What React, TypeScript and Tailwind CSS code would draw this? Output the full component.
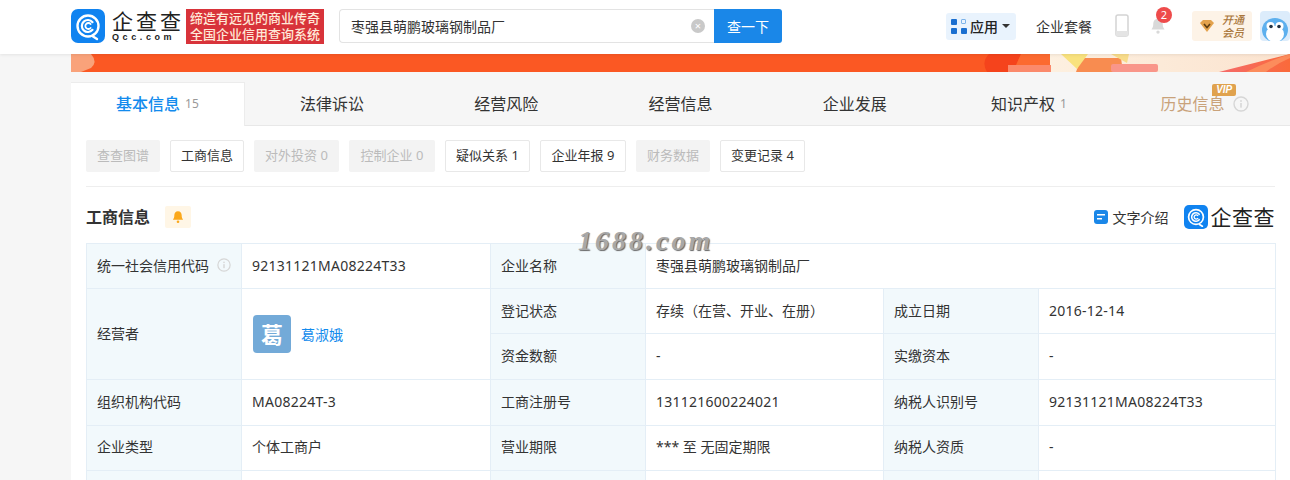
const FONT = "font-['Noto_Sans','Noto_Sans_CJK_SC',sans-serif]";

function LogoMark({ className }: { className: string }) {
  return (
    <svg viewBox="0 0 34 34" className={className}>
      <rect width="34" height="34" rx="7" fill="#1083f0" />
      <circle cx="17" cy="17" r="10.5" fill="none" stroke="#fff" strokeWidth="2.4" />
      <path d="M22 27.5 L26 30" stroke="#fff" strokeWidth="2.4" strokeLinecap="round" />
      <path d="M21.5 13.2 A6 6 0 1 0 21.5 20.8" fill="none" stroke="#fff" strokeWidth="2.2" strokeLinecap="round" />
      <path d="M19.6 15 A3 3 0 1 0 19.6 19" fill="none" stroke="#fff" strokeWidth="1.8" strokeLinecap="round" />
    </svg>
  );
}

function InfoIcon({ className }: { className: string }) {
  return (
    <svg viewBox="0 0 16 16" className={className}>
      <circle cx="8" cy="8" r="7" fill="none" stroke="#d6d6d6" strokeWidth="1.4" />
      <rect x="7.2" y="7" width="1.6" height="4.6" fill="#d6d6d6" />
      <rect x="7.2" y="4.2" width="1.6" height="1.6" fill="#d6d6d6" />
    </svg>
  );
}

function Bell({ className, color }: { className: string; color: string }) {
  return (
    <svg viewBox="0 0 16 16" className={className}>
      <path d="M8 1.5c-2.8 0-4.2 2.2-4.2 4.6 0 2.6-.7 3.8-1.6 5h11.6c-.9-1.2-1.6-2.4-1.6-5C12.200 3.700 10.800 1.500 8 1.500z" fill={color} />
      <circle cx="8" cy="13.400" r="1.500" fill={color} />
    </svg>
  );
}

function Header() {
  return (
    <header className="h-[54px] bg-white shadow-[0_1px_3px_rgba(0,0,0,0.08)] flex items-center pl-[71px] pb-[2px] relative z-10">
      <LogoMark className="w-[34px] h-[34px]" />
      <div className="ml-[7px] w-[70px] flex flex-col text-[#222]">
        <span className="text-[21px] leading-[22px] tracking-[3px] whitespace-nowrap">企查查</span>
        <span className="text-[9px] leading-[10px] tracking-[3.600px] font-['Liberation_Sans',sans-serif] font-bold whitespace-nowrap">Qcc.com</span>
      </div>
      <div className="ml-[4px] w-[138px] h-[35px] bg-[#d8333a] text-[#ffe9d8] text-[13px] leading-[16px] flex flex-col items-center justify-center font-medium whitespace-nowrap">
        <span>缔造有远见的商业传奇</span>
        <span>全国企业信用查询系统</span>
      </div>
      <div className="ml-[15px] w-[375px] h-[34px] border border-[#e3e3e3] border-r-0 rounded-l-[4px] flex items-center pl-[11px] pr-[9px] text-[14px] text-[#333]">
        <span className="flex-1">枣强县萌鹏玻璃钢制品厂</span>
        <span className="w-[14px] h-[14px] rounded-full bg-[#c9c9c9] text-white text-[11px] leading-[14px] text-center">×</span>
      </div>
      <button className="w-[68px] h-[34px] bg-[#1a87e8] text-white text-[14px] rounded-r-[3px]">查一下</button>
      <div className="ml-[164px] w-[70px] h-[27px] bg-[#e9f3fd] rounded-[3px] flex items-center pl-[5px]">
        <div className="grid grid-cols-2 gap-[3px] w-[16px]">
          <span className="w-[6px] h-[6px] rounded-[1px] bg-[#1a6fd0]" />
          <span className="w-[5px] h-[5px] rounded-[1px] border border-[#7db4ea]" />
          <span className="w-[6px] h-[6px] rounded-[1px] bg-[#1a6fd0]" />
          <span className="w-[6px] h-[6px] rounded-[1px] bg-[#1a6fd0]" />
        </div>
        <span className="ml-[3px] text-[14px] text-[#222] font-medium">应用</span>
        <span className="ml-[4px] w-0 h-0 border-x-[4px] border-x-transparent border-t-[4px] border-t-[#333]" />
      </div>
      <span className="ml-[20px] text-[14px] text-[#333]">企业套餐</span>
      <svg viewBox="0 0 14 24" className="ml-[23px] w-[14px] h-[24px]">
        <rect x="1" y="1" width="12" height="21" rx="2" fill="none" stroke="#d4d4d4" strokeWidth="1.500" />
        <rect x="1" y="17" width="12" height="5" rx="1" fill="#e4e4e4" />
      </svg>
      <div className="relative ml-[20px] w-[18px] h-[20px]">
        <Bell className="w-[18px] h-[20px]" color="#d9d9d9" />
        <span className="absolute -top-[9px] left-[7px] w-[16px] h-[16px] rounded-full bg-[#ee4b4b] text-white text-[11px] leading-[16px] text-center">2</span>
      </div>
      <div className="ml-[25px] w-[60px] h-[30px] bg-[#fdf3e7] rounded-[3px] flex items-center pl-[7px]">
        <svg viewBox="0 0 16 14" className="w-[16px] h-[14px]">
          <path d="M1 4 L4 1 H12 L15 4 L8 13 Z" fill="#e3a24c" />
          <path d="M5 5 L8 8.500 L11 5" fill="none" stroke="#5d3d12" strokeWidth="1.600" />
        </svg>
        <span className="ml-[6px] text-[11px] leading-[13px] text-[#a9763a] font-medium italic w-[24px] text-center">开通 会员</span>
      </div>
      <svg viewBox="0 0 30 30" className="ml-[8px] w-[30px] h-[30px] shrink-0">
        <rect width="30" height="30" rx="4" fill="#dcecfb" />
        <ellipse cx="15" cy="19" rx="13" ry="12" fill="#5db0ee" />
        <ellipse cx="15" cy="23" rx="9" ry="8" fill="#fff" />
        <circle cx="10.500" cy="15" r="4" fill="#fff" />
        <circle cx="19.500" cy="15" r="4" fill="#fff" />
        <circle cx="11" cy="15.500" r="1.800" fill="#234" />
        <circle cx="19" cy="15.500" r="1.800" fill="#234" />
      </svg>
    </header>
  );
}

function Banner() {
  return (
    <div className="h-[18px] ml-[71px] overflow-hidden bg-[#fb5823]">
      <svg viewBox="0 0 1219 18" className="w-[1219px] h-[18px] block">
        <defs>
          <linearGradient id="cream" x1="0" x2="1" y1="0" y2="0">
            <stop offset="0" stopColor="#fdf0e0" />
            <stop offset="1" stopColor="#fbe3cf" />
          </linearGradient>
          <linearGradient id="edge" x1="0" x2="1" y1="0" y2="0">
            <stop offset="0" stopColor="#f56a6a" />
            <stop offset="1" stopColor="#fa6a3a" />
          </linearGradient>
        </defs>
        <path d="M0 0H20Q27 8 20 14L10 18H0Z" fill="#f9a27a" />
        <path d="M918 0H950L942 18H916Q910 8 918 0Z" fill="#f5431c" />
        <path d="M950 0H980V18H942Z" fill="#fc6a30" />
        <rect x="979" y="0" width="240" height="18" fill="url(#cream)" />
        <path d="M1010 4H1050L1052 18H1005Z" fill="#f88c50" />
        <rect x="937" y="11" width="43" height="7" fill="#fb8a6c" />
        <rect x="1040" y="10" width="47" height="8" rx="2" fill="#f9968a" />
        <path d="M990 0H1017L1006 15Z" fill="#f9e27e" />
        <path d="M1040 0H1058L1056 9Z" fill="#f8dc8a" />
        <path d="M1148 18Q1180 10 1219 0V18Z" fill="url(#edge)" />
        <path d="M1175 18Q1200 6 1219 0V4Q1205 10 1195 18Z" fill="#fc8c5c" />
      </svg>
    </div>
  );
}

type TabItem = { label: string; count?: string };
const tabs: TabItem[] = [
  { label: "法律诉讼" },
  { label: "经营风险" },
  { label: "经营信息" },
  { label: "企业发展" },
  { label: "知识产权", count: "1" },
];

function Tabs() {
  return (
    <div className="h-[44px] flex bg-[#f6f6f6] border-b border-[#e8e8e8]">
      <div className="w-[174px] h-[44px] pb-[2px] bg-white border-r border-t border-[#ececec] flex items-center justify-center text-[16px] text-[#128bed] font-medium">
        基本信息<span className="ml-[5px] text-[12px] text-[#999] font-normal">15</span>
      </div>
      {tabs.map((t) => (
        <div key={t.label} className="w-[174.500px] flex items-center justify-center text-[16px] text-[#333]">
          {t.label}
          {t.count && <span className="ml-[5px] text-[12px] text-[#999]">{t.count}</span>}
        </div>
      ))}
      <div className="relative pl-[3px] w-[174px] flex items-center justify-center text-[16px] text-[#c9a27a]">
        历史信息
        <InfoIcon className="ml-[8px] w-[16px] h-[16px]" />
        <span className="absolute left-[96px] top-[2px] w-[24px] h-[12px] bg-[#e0a24e] rounded-[2px] rounded-bl-none text-white text-[10px] leading-[12px] font-bold italic text-center font-['Liberation_Sans',sans-serif]">VIP</span>
      </div>
    </div>
  );
}

const chips = [
  { label: "查查图谱", on: false, w: "w-[74px]" },
  { label: "工商信息", on: true, w: "w-[74px]" },
  { label: "对外投资 0", on: false, w: "w-[85px]" },
  { label: "控制企业 0", on: false, w: "w-[86px]" },
  { label: "疑似关系 1", on: true, w: "w-[85px]" },
  { label: "企业年报 9", on: true, w: "w-[86px]" },
  { label: "财务数据", on: false, w: "w-[74px]" },
  { label: "变更记录 4", on: true, w: "w-[85px]" },
];

function Chips() {
  return (
    <div className="mx-[15px] h-[61px] flex items-start gap-[10px] pt-[14px] border-b border-[#eeeeee]">
      {chips.map((c) => (
        <div
          key={c.label}
          className={`${c.w} h-[32px] rounded-[2px] flex items-center justify-center text-[13px] whitespace-nowrap ${
            c.on ? "border border-[#e8e8e8] text-[#333] bg-white" : "bg-[#f3f3f3] text-[#bbbbbb]"
          }`}
        >
          {c.label}
        </div>
      ))}
    </div>
  );
}

function SectionTitle() {
  return (
    <div className="mx-[15px] h-[56px] pt-[4px] flex items-center">
      <span className="text-[16px] text-[#333] font-bold">工商信息</span>
      <span className="ml-[15px] w-[26px] h-[22px] rounded-[2px] bg-[#fff6e6] flex items-center justify-center">
        <Bell className="w-[14px] h-[14px]" color="#fba81b" />
      </span>
      <div className="ml-auto flex items-center">
        <svg viewBox="0 0 14 14" className="w-[14px] h-[14px]">
          <rect width="14" height="14" rx="3" fill="#1a87e8" />
          <rect x="3" y="4" width="8" height="1.500" fill="#fff" />
          <rect x="3" y="8" width="5" height="1.500" fill="#fff" />
        </svg>
        <span className="ml-[5px] text-[14px] text-[#333]">文字介绍</span>
        <LogoMark className="ml-[15px] w-[24px] h-[24px]" />
        <span className="ml-[3px] text-[21px] leading-[24px] text-[#222] tracking-[0.500px] whitespace-nowrap">企查查</span>
      </div>
    </div>
  );
}

function Label({ children, rowSpan }: { children: React.ReactNode; rowSpan?: number }) {
  return (
    <td rowSpan={rowSpan} className="border border-[#e4eef6] bg-[#f2f9fc] px-[10px] pb-[2px] text-[14px] text-[#333]">
      {children}
    </td>
  );
}

function Value({ children, colSpan }: { children: React.ReactNode; colSpan?: number }) {
  return (
    <td colSpan={colSpan} className="border border-[#e4eef6] px-[10px] pb-[2px] text-[14px] text-[#333]">
      {children}
    </td>
  );
}

function Code({ children }: { children: React.ReactNode }) {
  return <span className="tracking-[0.250px]">{children}</span>;
}

function InfoTable() {
  return (
    <table className="ml-[15px] w-[1189px] table-fixed border-collapse">
      <colgroup>
        <col className="w-[155px]" />
        <col className="w-[249px]" />
        <col className="w-[155px]" />
        <col className="w-[238px]" />
        <col className="w-[155px]" />
        <col className="w-[237px]" />
      </colgroup>
      <tbody>
        <tr className="h-[45px]">
          <Label>
            <span className="flex items-center whitespace-nowrap">
              统一社会信用代码
              <InfoIcon className="ml-[8px] w-[16px] h-[16px]" />
            </span>
          </Label>
          <Value><Code>92131121MA08224T33</Code></Value>
          <Label>企业名称</Label>
          <Value colSpan={3}>枣强县萌鹏玻璃钢制品厂</Value>
        </tr>
        <tr className="h-[45px]">
          <Label rowSpan={2}>经营者</Label>
          <td rowSpan={2} className="border border-[#e4eef6] px-[10px]">
            <div className="flex items-center">
              <span className="ml-[1px] w-[38px] h-[38px] rounded-[4px] bg-[#73aad8] text-white text-[22px] font-bold flex items-center justify-center">葛</span>
              <span className="ml-[10px] text-[14px] text-[#128bed]">葛淑娥</span>
            </div>
          </td>
          <Label>登记状态</Label>
          <Value>存续（在营、开业、在册）</Value>
          <Label>成立日期</Label>
          <Value><Code>2016-12-14</Code></Value>
        </tr>
        <tr className="h-[46px]">
          <Label>资金数额</Label>
          <Value>-</Value>
          <Label>实缴资本</Label>
          <Value>-</Value>
        </tr>
        <tr className="h-[45.500px]">
          <Label>组织机构代码</Label>
          <Value><Code>MA08224T-3</Code></Value>
          <Label>工商注册号</Label>
          <Value><Code>131121600224021</Code></Value>
          <Label>纳税人识别号</Label>
          <Value><Code>92131121MA08224T33</Code></Value>
        </tr>
        <tr className="h-[45px]">
          <Label>企业类型</Label>
          <Value>个体工商户</Value>
          <Label>营业期限</Label>
          <Value>*** 至 无固定期限</Value>
          <Label>纳税人资质</Label>
          <Value>-</Value>
        </tr>
        <tr className="h-[45px]">
          <Label>&nbsp;</Label>
          <Value>&nbsp;</Value>
          <Label>&nbsp;</Label>
          <Value>&nbsp;</Value>
          <Label>&nbsp;</Label>
          <Value>&nbsp;</Value>
        </tr>
      </tbody>
    </table>
  );
}

export default function App() {
  return (
    <div className={`relative h-[480px] w-[1290px] overflow-hidden bg-[#f6f6f6] ${FONT}`}>
      <Header />
      <Banner />
      <div className="ml-[71px] mt-[10px] w-[1219px] bg-white h-[400px]">
        <Tabs />
        <Chips />
        <SectionTitle />
        <InfoTable />
      </div>
      <span className="absolute left-[578px] top-[224px] text-[28px] leading-[34px] font-bold italic tracking-[3px] text-[#a8a8a8] font-['Liberation_Serif',serif] [text-shadow:1px_1px_1px_#666]">
        1688.com
      </span>
    </div>
  );
}
